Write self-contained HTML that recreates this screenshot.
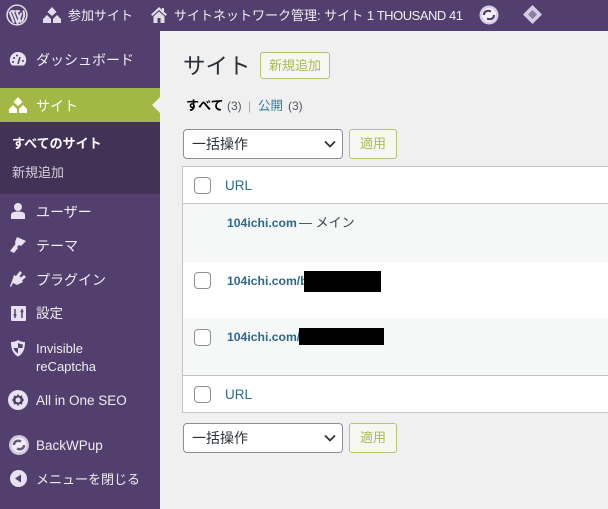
<!DOCTYPE html>
<html lang="ja"><head><meta charset="utf-8"><title>サイト</title>
<style>
html,body{margin:0;padding:0}
body{width:608px;height:509px;overflow:hidden;position:relative;background:#f0f0f1;font-family:"Liberation Sans","Noto Sans CJK JP",sans-serif;color:#3c434a}
div,a,svg{position:absolute}
.t{white-space:nowrap;line-height:20px}
.bar{left:0;top:0;width:608px;height:31px;background:#523f6d}
.side{left:0;top:31px;width:160px;height:478px;background:#523f6d}
.m{color:#f0eef3;font-size:14px;left:36px}
.b{color:#f0eef3;font-size:13.5px}
.btn{border:1px solid #b5c56f;border-radius:3px;color:#a9bb55;background:#f6f7f0;box-sizing:border-box;text-align:center;font-size:13px}
.sel{left:183px;width:160px;height:30px;border:1px solid #8c8f94;border-radius:4px;background:#fff;box-sizing:border-box;font-size:14px;color:#2c3338;line-height:28px;padding-left:8px}
.cb{left:194px;width:17px;height:17px;box-sizing:border-box;border:1px solid #8c8f94;border-radius:4px;background:#fff}
.lnk{color:#2b6a8c;font-size:12.2px;font-weight:bold;left:227px}
.url{color:#2b6a8c;font-size:13.5px;left:225px}
.k{background:#000}
</style></head><body>
<div class="bar"></div>
<svg style="left:6px;top:4px" width="22" height="22" viewBox="0 0 20 20"><circle cx="10" cy="10" r="9" fill="none" stroke="#e2dcea" stroke-width="1.4"/><path d="M3.2 7 7.2 17M6 6.500 10.500 17.500 14 8M9.300 6.500 13.500 17M4 6.500h4M8.500 6.500h4M15.500 6c1.500 2.500 1.500 5-1 10" fill="none" stroke="#e2dcea" stroke-width="1.900"/></svg>
<svg style="left:42px;top:6px" width="20" height="18" viewBox="0 0 20 18" fill="#e2dcea"><path d="M10 1 14.500 6 10 10 5.500 6zM5 9 9 13V17H1V13zM15 9 19 13V17H11V13z"/></svg>
<div class="t b" style="left:68px;top:6px;font-size:13px">参加サイト</div>
<svg style="left:150px;top:6px" width="18" height="18" viewBox="0 0 18 18" fill="#e2dcea"><path d="M9 1 1 8.500 2.500 10 9 4 15.500 10 17 8.500 14 5.700V2H12V3.800zM3.500 10.500 9 5.500 14.500 10.500V17H10.500V12H7.500V17H3.500z"/></svg>
<div class="t b" style="left:174px;top:6px;font-size:13px">サイトネットワーク管理: サイト <span style="letter-spacing:-.48px">1 THOUSAND 41</span></div>
<svg style="left:479px;top:5px" width="20" height="20" viewBox="0 0 20 20"><circle cx="10" cy="10" r="9.500" fill="#d5cde2"/><circle cx="10" cy="10" r="7" fill="#f5f3f8"/><path d="M5 10C5 6 9 5 12 6.500M15 10C15 14 11 15 8 13.500" fill="none" stroke="#523f6d" stroke-width="2.200"/></svg>
<svg style="left:522px;top:4px" width="21" height="21" viewBox="0 0 21 21"><path d="M10.500 1 20 10.500 10.500 20 1 10.500z" fill="#d5cde2"/><path d="M10.500 6 15 10.500 10.500 15 6 10.500z" fill="#8d7ba8"/></svg>

<div class="side"></div>
<div style="left:0;top:88px;width:160px;height:34px;background:#a3b745"></div>
<div style="left:152px;top:97px;width:0;height:0;border:8px solid transparent;border-right-color:#f0f0f1;border-left:0"></div>
<div style="left:0;top:122px;width:160px;height:72px;background:#413256"></div>

<svg style="left:9px;top:51px" width="18" height="17" viewBox="0 0 18 17"><path d="M9 1A8 8 0 0 0 3 14.500H15A8 8 0 0 0 9 1z" fill="#e8e2f0"/><path d="M9 13 11 6" stroke="#523f6d" stroke-width="1.600"/><circle cx="5" cy="7" r="1" fill="#523f6d"/><circle cx="4" cy="11" r="1" fill="#523f6d"/><circle cx="14" cy="10" r="1" fill="#523f6d"/><circle cx="8" cy="4.500" r="1" fill="#523f6d"/></svg>
<div class="t m" style="top:50px;font-size:14px">ダッシュボード</div>
<svg style="left:8px;top:96px" width="20" height="18" viewBox="0 0 20 18" fill="#fff"><path d="M10 1 14.500 6 10 10 5.500 6zM5 9 9 13V17H1V13zM15 9 19 13V17H11V13z"/></svg>
<div class="t m" style="top:96px;color:#fff">サイト</div>
<div class="t" style="left:12px;top:134px;font-size:13px;font-weight:bold;color:#fff">すべてのサイト</div>
<div class="t" style="left:12px;top:163px;font-size:13px;color:#d3cddc">新規追加</div>

<svg style="left:10px;top:202px" width="16" height="18" viewBox="0 0 16 18" fill="#e8e2f0"><circle cx="8" cy="5" r="4"/><path d="M1 17V13C1 10.500 3.500 9.500 8 9.500S15 10.500 15 13V17z"/></svg>
<div class="t m" style="top:202px">ユーザー</div>
<svg style="left:9px;top:236px" width="18" height="18" viewBox="0 0 18 18" fill="#e8e2f0"><path d="M8 1 17 5 12 10 10 9 8 11 9 12 5 17 1 15 5 10 6.500 8 6 6z"/></svg>
<div class="t m" style="top:236px">テーマ</div>
<svg style="left:9px;top:270px" width="18" height="18" viewBox="0 0 18 18" fill="#e8e2f0"><path d="M11 1 13 3 10.500 6 12 7.500 15 5 17 7 13 10.500 14 12 8 15 4 13 2 17 1 16 3 11 5 5 7 6z"/></svg>
<div class="t m" style="top:270px">プラグイン</div>
<svg style="left:11px;top:306px" width="15" height="15" viewBox="0 0 15 15"><rect width="15" height="15" rx="1" fill="#e8e2f0"/><path d="M4 3V12M11 3V12M2.500 9H5.500M9.500 5.500H12.500" stroke="#523f6d" stroke-width="1.500"/></svg>
<div class="t m" style="top:304px;font-size:13.500px">設定</div>
<svg style="left:10px;top:339px" width="16" height="18" viewBox="0 0 16 18"><path d="M8 1C10 2.500 13 3 15 3 15 10 13 15 8 17.500 3 15 1 10 1 3 3 3 6 2.500 8 1z" fill="#e8e2f0"/><path d="M8 4V9H3.500C4 11 5.500 13 8 14.500V9H12.500C12.700 7.500 12.800 6.500 12.800 5.500 11 5.300 9.500 4.800 8 4z" fill="#523f6d"/></svg>
<div class="t m" style="top:340px;font-size:13px;line-height:18px">Invisible<br>reCaptcha</div>
<svg style="left:8px;top:390px" width="20" height="20" viewBox="0 0 20 20"><circle cx="10" cy="10" r="10" fill="#e8e2f0"/><path d="M10 4 11.500 6 14 5.500 14.500 8 16 10 14.500 12 14 14.500 11.500 14 10 16 8.500 14 6 14.500 5.500 12 4 10 5.500 8 6 5.500 8.500 6z" fill="#523f6d"/><circle cx="10" cy="10" r="2.500" fill="#e8e2f0"/></svg>
<div class="t m" style="top:391px;font-size:13.500px">All in One SEO</div>
<svg style="left:9px;top:435px" width="20" height="20" viewBox="0 0 20 20"><circle cx="10" cy="10" r="10" fill="#cfc7db"/><circle cx="10" cy="10" r="7.500" fill="#f0edf4"/><path d="M5 10C5 6 9 5 12 6.500M15 10C15 14 11 15 8 13.500" fill="none" stroke="#6a5886" stroke-width="2.500"/></svg>
<div class="t m" style="top:436px;font-size:13.500px">BackWPup</div>
<svg style="left:10px;top:470px" width="17" height="17" viewBox="0 0 17 17"><circle cx="8.500" cy="8.500" r="8.500" fill="#e8e2f0"/><path d="M11 4.500V12.500L5 8.500z" fill="#523f6d"/></svg>
<div class="t m" style="top:470px;font-size:13px">メニューを閉じる</div>

<div class="t" style="left:183px;top:53px;font-size:22.500px;line-height:28px;color:#2a3036">サイト</div>
<div class="btn t" style="left:260px;top:52px;width:70px;height:27px;line-height:25px">新規追加</div>
<div class="t" style="left:186px;top:96px;font-size:13px;color:#000;font-weight:bold">すべて</div>
<div class="t" style="left:227px;top:96px;font-size:12px;color:#50575e">(3)</div>
<div class="t" style="left:248px;top:96px;font-size:12px;color:#a7aaad">|</div>
<div class="t" style="left:258px;top:96px;font-size:12.500px;color:#2b7ea6">公開</div>
<div class="t" style="left:288px;top:96px;font-size:12px;color:#50575e">(3)</div>

<div class="sel" style="top:129px">一括操作</div>
<svg style="left:324px;top:140px" width="12" height="8" viewBox="0 0 12 8"><path d="M1 1.500 6 6.500 11 1.500" fill="none" stroke="#2c3338" stroke-width="1.800"/></svg>
<div class="btn t" style="left:349px;top:129px;width:48px;height:30px;line-height:28px">適用</div>

<div style="left:182px;top:166px;width:430px;height:247px;border:1px solid #c3c4c7;box-sizing:border-box;background:#fff"></div>
<div style="left:183px;top:203px;width:425px;height:1px;background:#c3c4c7"></div>
<div style="left:183px;top:204px;width:425px;height:58px;background:#f6f7f7"></div>
<div style="left:183px;top:318px;width:425px;height:57px;background:#f6f7f7"></div>
<div style="left:183px;top:375px;width:425px;height:1px;background:#c3c4c7"></div>

<div class="cb" style="top:177px"></div>
<div class="t url" style="top:176px">URL</div>
<div class="t lnk" style="top:213px">104ichi.com</div>
<div class="t" style="left:299px;top:213px;font-size:13px;color:#3c434a">— メイン</div>
<div class="cb" style="top:272px"></div>
<div class="t lnk" style="top:271px">104ichi.com/b</div>
<div class="k" style="left:304px;top:271px;width:77px;height:21px"></div>
<div class="cb" style="top:329px"></div>
<div class="t lnk" style="top:327px">104ichi.com/</div>
<div class="k" style="left:299px;top:328px;width:85px;height:17px"></div>
<div class="cb" style="top:386px"></div>
<div class="t url" style="top:385px">URL</div>

<div class="sel" style="top:423px">一括操作</div>
<svg style="left:324px;top:434px" width="12" height="8" viewBox="0 0 12 8"><path d="M1 1.500 6 6.500 11 1.500" fill="none" stroke="#2c3338" stroke-width="1.800"/></svg>
<div class="btn t" style="left:349px;top:423px;width:48px;height:30px;line-height:28px">適用</div>
</body></html>
